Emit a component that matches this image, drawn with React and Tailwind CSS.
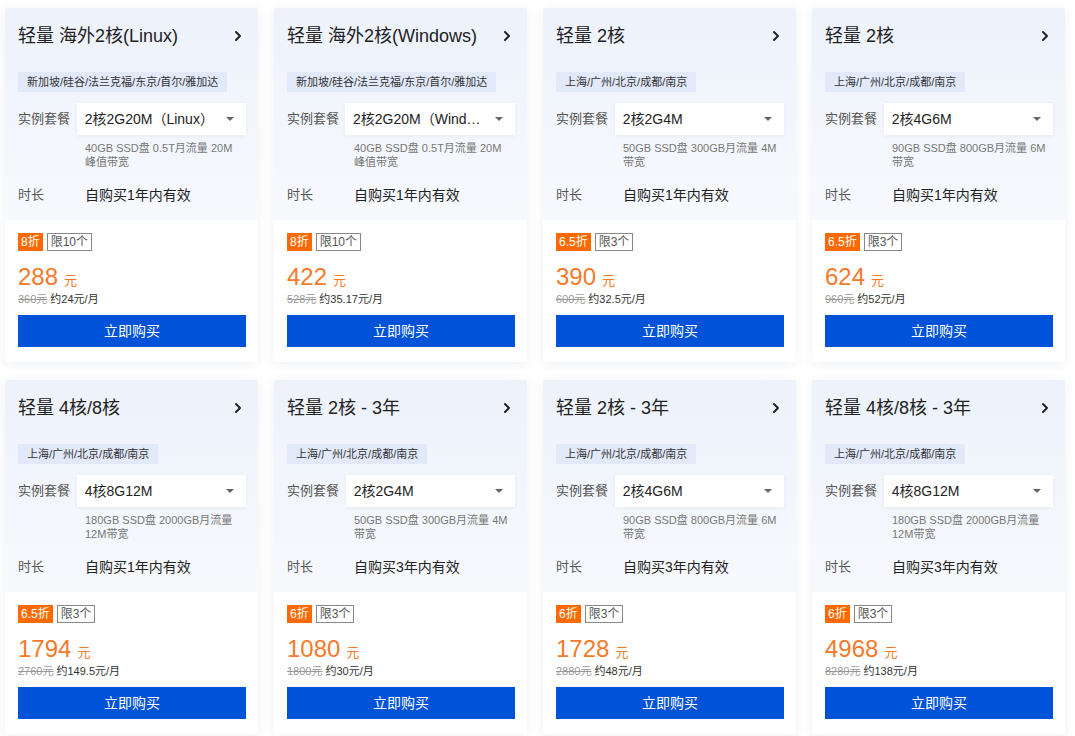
import React from "react";

const cards = [
  { title: "轻量 海外2核(Linux)", region: "新加坡/硅谷/法兰克福/东京/首尔/雅加达", spec: "2核2G20M（Linux）", desc: "40GB SSD盘 0.5T月流量 20M 峰值带宽", dur: "自购买1年内有效", off: "8折", limit: "限10个", price: "288", orig: "360元", month: "约24元/月" },
  { title: "轻量 海外2核(Windows)", region: "新加坡/硅谷/法兰克福/东京/首尔/雅加达", spec: "2核2G20M（Windows）", desc: "40GB SSD盘 0.5T月流量 20M 峰值带宽", dur: "自购买1年内有效", off: "8折", limit: "限10个", price: "422", orig: "528元", month: "约35.17元/月" },
  { title: "轻量 2核", region: "上海/广州/北京/成都/南京", spec: "2核2G4M", desc: "50GB SSD盘 300GB月流量 4M 带宽", dur: "自购买1年内有效", off: "6.5折", limit: "限3个", price: "390", orig: "600元", month: "约32.5元/月" },
  { title: "轻量 2核", region: "上海/广州/北京/成都/南京", spec: "2核4G6M", desc: "90GB SSD盘 800GB月流量 6M 带宽", dur: "自购买1年内有效", off: "6.5折", limit: "限3个", price: "624", orig: "960元", month: "约52元/月" },
  { title: "轻量 4核/8核", region: "上海/广州/北京/成都/南京", spec: "4核8G12M", desc: "180GB SSD盘 2000GB月流量 12M带宽", dur: "自购买1年内有效", off: "6.5折", limit: "限3个", price: "1794", orig: "2760元", month: "约149.5元/月" },
  { title: "轻量 2核 - 3年", region: "上海/广州/北京/成都/南京", spec: "2核2G4M", desc: "50GB SSD盘 300GB月流量 4M 带宽", dur: "自购买3年内有效", off: "6折", limit: "限3个", price: "1080", orig: "1800元", month: "约30元/月" },
  { title: "轻量 2核 - 3年", region: "上海/广州/北京/成都/南京", spec: "2核4G6M", desc: "90GB SSD盘 800GB月流量 6M 带宽", dur: "自购买3年内有效", off: "6折", limit: "限3个", price: "1728", orig: "2880元", month: "约48元/月" },
  { title: "轻量 4核/8核 - 3年", region: "上海/广州/北京/成都/南京", spec: "4核8G12M", desc: "180GB SSD盘 2000GB月流量 12M带宽", dur: "自购买3年内有效", off: "6折", limit: "限3个", price: "4968", orig: "8280元", month: "约138元/月" },
];

function Card({ c }) {
  return (
    <div className="w-[253px] h-[354px] flex flex-col bg-white rounded-[2px] shadow-[0_2px_12px_rgba(20,40,90,0.07)] overflow-hidden">
      <div className="bg-linear-to-b from-[#edf2fb] to-[#f7f9fd] pl-[13px] pr-[12px] pt-[14px] pb-[15px]">
        <div className="flex items-center justify-between h-[28px]">
          <span className="text-[18px] leading-[28px] text-[#222]">{c.title}</span>
          <svg width="10" height="14" viewBox="0 0 10 14" className="mr-[3px]">
            <path d="M3 3 L7 7 L3 11" fill="none" stroke="#222" strokeWidth="2" strokeLinecap="round" strokeLinejoin="round" />
          </svg>
        </div>
        <div className="mt-[22px] flex">
          <span className="h-[20px] leading-[20px] px-[9px] bg-[#e1e9fb] text-[11px] text-[#333]">{c.region}</span>
        </div>
        <div className="mt-[11px] flex items-center">
          <span className="w-[59px] text-[13px] text-[#555]">实例套餐</span>
          <div className="w-[170px] h-[32px] bg-white shadow-[0_1px_4px_rgba(0,0,0,0.05)] flex items-center pl-[8px] pr-[12px]">
            <span className="flex-1 truncate text-[14px] text-[#222]">{c.spec}</span>
            <svg width="8" height="4" viewBox="0 0 8 4" className="ml-[8px]">
              <path d="M0 0 L8 0 L4 4 Z" fill="#666" />
            </svg>
          </div>
        </div>
        <div className="mt-[6px] ml-[67px] w-[160px] text-[11px] leading-[14px] text-[#777]">{c.desc}</div>
        <div className="mt-[16px] flex items-center h-[20px]">
          <span className="w-[67px] text-[13px] text-[#555]">时长</span>
          <span className="text-[14px] text-[#222]">{c.dur}</span>
        </div>
      </div>
      <div className="flex-1 pl-[13px] pr-[12px] pt-[13px]">
        <div className="flex items-center gap-[4px]">
          <span className="h-[18px] leading-[18px] px-[3px] bg-[#ff6a00] text-white text-[12px]">{c.off}</span>
          <span className="h-[18px] leading-[16px] px-[3px] border border-[#888] text-[#555] text-[12px]">{c.limit}</span>
        </div>
        <div className="mt-[12px] h-[28px] flex items-end">
          <span className="text-[24px] leading-[28px] text-[#f47a2a]">{c.price}</span>
          <span className="ml-[6px] text-[13px] leading-[20px] text-[#f47a2a]">元</span>
        </div>
        <div className="h-[16px] leading-[16px] text-[11px]">
          <span className="line-through text-[#999]">{c.orig}</span>
          <span className="ml-[3px] text-[#333]">{c.month}</span>
        </div>
        <button className="mt-[8px] w-full h-[32px] bg-[#0052d9] text-white text-[14px]">立即购买</button>
      </div>
    </div>
  );
}

export default function App() {
  return (
    <div
      className="w-[1075px] h-[736px] bg-white pl-[5px] pt-[8px]"
      style={{ fontFamily: '"Liberation Sans", "Noto Sans CJK SC", sans-serif' }}
    >
      <div className="grid grid-cols-[repeat(4,253px)] gap-x-[16px] gap-y-[18px]">
        {cards.map((c, i) => (
          <Card key={i} c={c} />
        ))}
      </div>
    </div>
  );
}
